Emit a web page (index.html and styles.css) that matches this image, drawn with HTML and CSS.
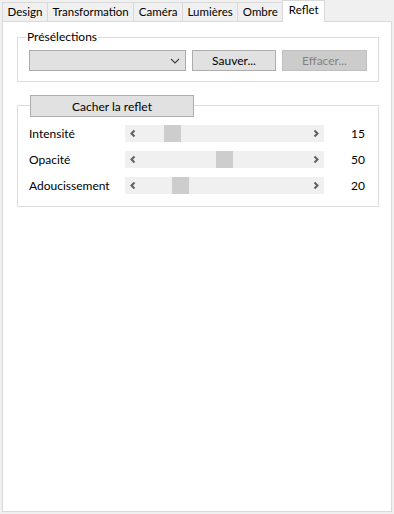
FILE: index.html
```html
<!DOCTYPE html>
<html lang="fr">
<head>
  <meta charset="UTF-8" />
  <title>Reflet</title>
  <link rel="stylesheet" href="styles.css">
</head>
<body>
  <div class="tabs">
    <div class="tab">Design</div>
    <div class="tab">Transformation</div>
    <div class="tab">Caméra</div>
    <div class="tab">Lumières</div>
    <div class="tab">Ombre</div>
    <div class="tab active">Reflet</div>
  </div>

  <div class="panel">
    <div class="group presets">
      <div class="legend">Présélections</div>
      <div class="preset-row">
        <div class="combo">
          <svg width="10" height="6" viewBox="0 0 10 6"><path d="M1 1 L5 5 L9 1" fill="none" stroke="#404040" stroke-width="1.1"/></svg>
        </div>
        <button class="btn save">Sauver...</button>
        <button class="btn clear" disabled>Effacer...</button>
      </div>
    </div>

    <div class="group reflect">
      <button class="btn toggle">Cacher la reflet</button>

      <div class="slider-row">
        <span class="label">Intensité</span>
        <div class="scroll">
          <span class="arrow"><svg width="17" height="17" viewBox="0 0 17 17"><path d="M9.5 5.5 L6.5 8.5 L9.5 11.5" fill="none" stroke="#606060" stroke-width="2"/></svg></span>
          <div class="track"><span class="thumb" style="--v: 15"></span></div>
          <span class="arrow"><svg width="17" height="17" viewBox="0 0 17 17"><path d="M7.5 5.5 L10.5 8.5 L7.5 11.5" fill="none" stroke="#606060" stroke-width="2"/></svg></span>
        </div>
        <span class="value">15</span>
      </div>

      <div class="slider-row">
        <span class="label">Opacité</span>
        <div class="scroll">
          <span class="arrow"><svg width="17" height="17" viewBox="0 0 17 17"><path d="M9.5 5.5 L6.5 8.5 L9.5 11.5" fill="none" stroke="#606060" stroke-width="2"/></svg></span>
          <div class="track"><span class="thumb" style="--v: 50"></span></div>
          <span class="arrow"><svg width="17" height="17" viewBox="0 0 17 17"><path d="M7.5 5.5 L10.5 8.5 L7.5 11.5" fill="none" stroke="#606060" stroke-width="2"/></svg></span>
        </div>
        <span class="value">50</span>
      </div>

      <div class="slider-row">
        <span class="label">Adoucissement</span>
        <div class="scroll">
          <span class="arrow"><svg width="17" height="17" viewBox="0 0 17 17"><path d="M9.5 5.5 L6.5 8.5 L9.5 11.5" fill="none" stroke="#606060" stroke-width="2"/></svg></span>
          <div class="track"><span class="thumb" style="--v: 20"></span></div>
          <span class="arrow"><svg width="17" height="17" viewBox="0 0 17 17"><path d="M7.5 5.5 L10.5 8.5 L7.5 11.5" fill="none" stroke="#606060" stroke-width="2"/></svg></span>
        </div>
        <span class="value">20</span>
      </div>
    </div>
  </div>
</body>
</html>
```
FILE: styles.css
```css
/* === Base === */
* {
  margin: 0;
  padding: 0;
  box-sizing: border-box;
}

body {
  background: #f0f0f0;
  font-family: Lato, "Noto Sans", sans-serif;
  font-size: 12px;
  color: #000;
  width: 394px;
  height: 514px;
  overflow: hidden;
}

/* === Tabs === */
.tabs {
  display: flex;
  align-items: flex-end;
  height: 21px;
  padding-left: 2px;
}

.tab {
  height: 19px;
  padding: 1px 4.5px 0;
  font-size: 11.5px;
  line-height: 16px;
  border: 1px solid #d9d9d9;
  border-bottom: none;
  margin-left: -1px;
  background: #f0f0f0;
}

.tab:first-child {
  margin-left: 0;
}

.tab.active {
  position: relative;
  z-index: 1;
  height: 22px;
  margin-bottom: -1px;
  padding: 1px 5.5px 0;
  background: #fff;
}

/* === Panel === */
.panel {
  margin: 0 2px;
  height: 491px;
  background: #fff;
  border: 1px solid #d9d9d9;
  padding: 15px 12px 0 14px;
}

.group {
  border: 1px solid #dcdcdc;
  padding: 0 0 0 11px;
}

.legend {
  display: table;
  margin: -9px 0 0 -3px;
  padding: 0 1px;
  background: #fff;
  line-height: 16px;
  color: #000;
}

.preset-row {
  display: flex;
  gap: 6px;
  margin-top: 5px;
  padding-bottom: 10px;
}

.combo {
  width: 157px;
  height: 21px;
  background: #e1e1e1;
  border: 1px solid #acacac;
  display: flex;
  align-items: center;
  justify-content: flex-end;
  padding-right: 5px;
}

.btn {
  font: inherit;
  height: 21px;
  background: #e1e1e1;
  border: 1px solid #adadad;
  color: #000;
}

.save {
  width: 84px;
}

.clear {
  width: 85px;
  background: #cccccc;
  border-color: #bfbfbf;
  color: #838383;
}

/* === Reflect group === */
.reflect {
  margin-top: 23px;
  padding-bottom: 12px;
}

.toggle {
  display: block;
  width: 164px;
  height: 22px;
  margin: -11px 0 0 1px;
}

.slider-row {
  display: flex;
  align-items: center;
  height: 17px;
  margin-top: 9px;
}

.slider-row:first-of-type {
  margin-top: 8px;
}

.label {
  width: 96px;
}

.scroll {
  display: flex;
  width: 199px;
  height: 17px;
  background: #f0f0f0;
}

.arrow {
  width: 17px;
  height: 17px;
  display: block;
}

.arrow svg {
  display: block;
}

.track {
  flex: 1;
  display: flex;
}

.thumb {
  display: block;
  width: 17px;
  height: 17px;
  background: #cdcdcd;
  margin-left: calc((100% - 17px) * var(--v) / 100);
}

.value {
  width: 41px;
  text-align: right;
}
```
